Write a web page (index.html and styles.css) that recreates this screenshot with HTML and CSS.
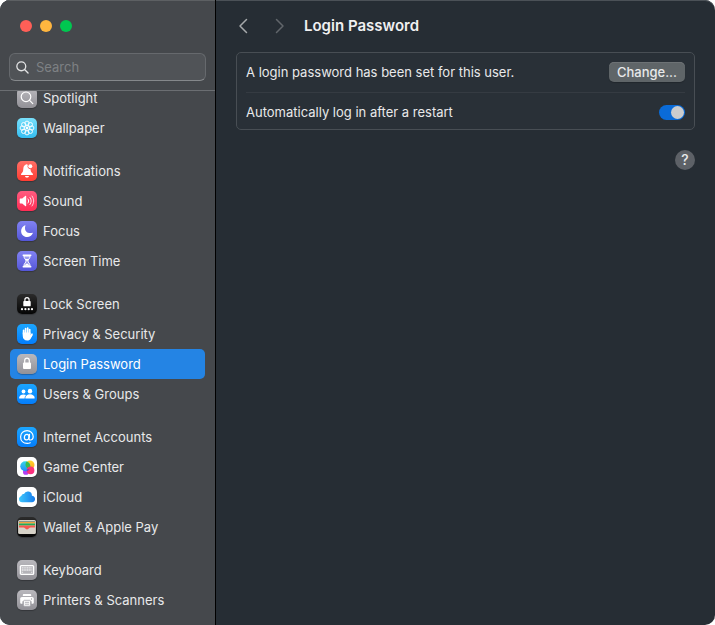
FILE: index.html
```html
<!DOCTYPE html>
<html lang="en">
<head>
<meta charset="utf-8">
<title>Login Password</title>
<link rel="stylesheet" href="styles.css">
</head>
<body>
<div class="window">
  <aside class="sidebar">
    <header class="sidebar-head">
      <div class="lights">
        <button class="light red" aria-label="Close"></button>
        <button class="light amber" aria-label="Minimize"></button>
        <button class="light green" aria-label="Zoom"></button>
      </div>
      <label class="search">
        <svg width="13" height="13" viewBox="0 0 14 14" fill="none" stroke="#e2e3e4" stroke-width="1.4" stroke-linecap="round" aria-hidden="true"><circle cx="5.7" cy="5.7" r="4.8"/><path d="M9.2 9.2L13 13"/></svg>
        <input type="search" placeholder="Search" aria-label="Search">
      </label>
    </header>
    <nav class="list">
      <div class="group">
        <a class="item" href="#spotlight"><svg class="tile gray" viewBox="0 0 20 20" aria-hidden="true"><g fill="none" stroke="#fff" stroke-width="1.2" stroke-linecap="round"><circle cx="9" cy="8.800" r="4.800"/><path d="M12.600 12.400l3.200 3.200"/></g></svg>Spotlight</a>
        <a class="item" href="#wallpaper"><svg class="tile cyan" viewBox="0 0 20 20" aria-hidden="true"><g fill="none" stroke="#fff" stroke-width=".9"><circle cx="10" cy="5.200" r="2.100"/><circle cx="13.400" cy="6.600" r="2.100"/><circle cx="14.800" cy="10" r="2.100"/><circle cx="13.400" cy="13.400" r="2.100"/><circle cx="10" cy="14.800" r="2.100"/><circle cx="6.600" cy="13.400" r="2.100"/><circle cx="5.200" cy="10" r="2.100"/><circle cx="6.600" cy="6.600" r="2.100"/><circle cx="10" cy="10" r="2.400"/></g><circle cx="10" cy="10" r="1.200" fill="#fff"/></svg>Wallpaper</a>
      </div>
      <div class="group">
        <a class="item" href="#notifications"><svg class="tile red-tile" viewBox="0 0 20 20" aria-hidden="true"><path fill="#fff" d="M9.600 3.300c.6 0 1 .3 1.200.7a2.900 2.900 0 0 0 2.700 4.200c.2 2.400.8 3.100 1.700 3.900.5.500.8.900.8 1.300 0 .4-.3.700-.8.700H4.800c-.5 0-.8-.3-.8-.7 0-.4.300-.8.800-1.300 1-.9 1.400-1.800 1.500-4.300.1-2 .8-3.300 2-3.800.1-.4.600-.7 1.300-.7zM8 14.900h4c-.2 1-1 1.700-2 1.700s-1.800-.7-2-1.700z"/><circle cx="13.300" cy="5.300" r="2" fill="#fff"/></svg>Notifications</a>
        <a class="item" href="#sound"><svg class="tile pink" viewBox="0 0 20 20" aria-hidden="true"><path fill="#fff" d="M2.700 8.300c0-.4.300-.7.700-.7h1.800l3-2.700c.5-.4 1-.2 1 .4v9.400c0 .6-.5.800-1 .4l-3-2.700H3.400c-.4 0-.7-.3-.7-.7z"/><g fill="none" stroke="#fff" stroke-linecap="round"><path d="M11 8c.9 1.300.9 2.700 0 4"/><path d="M13 6.500c1.600 2.300 1.600 4.700 0 7" opacity=".85"/><path d="M15 5c2.300 3.300 2.300 6.700 0 10" opacity=".75"/></g></svg>Sound</a>
        <a class="item" href="#focus"><svg class="tile indigo" viewBox="0 0 20 20" aria-hidden="true"><path fill="#fff" d="M8 4.200c.3-.1.600.1.400.5-.3.700-.4 1.400-.4 2.200 0 3.200 2.100 5.200 5.300 5.200.8 0 1.400-.1 2-.3.400-.2.700.1.500.5-.9 2.300-3.100 3.800-5.700 3.800-3.500 0-6-2.500-6-6 0-2.700 1.600-5.100 3.900-5.900z"/></svg>Focus</a>
        <a class="item" href="#screen-time"><svg class="tile indigo" viewBox="0 0 20 20" aria-hidden="true"><g fill="#fff"><rect x="5.500" y="3.500" width="9" height="1.500" rx=".7"/><rect x="5.500" y="15" width="9" height="1.500" rx=".7"/></g><path d="M6.900 5c0 2.600 2.200 3.500 2.200 5s-2.200 2.400-2.200 5h6.200c0-2.600-2.200-3.500-2.200-5s2.200-2.400 2.200-5z" fill="#fff" fill-opacity=".3" stroke="#fff" stroke-width="1"/><path fill="#fff" d="M8 8h4l-2 2.200zM7.500 14.700c.2-1.100 1.500-1.500 2.500-2.500 1 1 2.300 1.400 2.500 2.500z"/></svg>Screen Time</a>
      </div>
      <div class="group">
        <a class="item" href="#lock-screen"><svg class="tile black" viewBox="0 0 20 20" aria-hidden="true"><path d="M7.900 7.500V5.700a2.100 2.100 0 0 1 4.200 0v1.800" fill="none" stroke="#fff" stroke-width="1.200"/><rect x="6.300" y="6.900" width="7.400" height="5.400" rx=".9" fill="#fff"/><g fill="#fff"><circle cx="5" cy="15.200" r="1.100"/><circle cx="8.400" cy="15.200" r="1.100"/><circle cx="11.700" cy="15.200" r="1.100"/><circle cx="15" cy="15.200" r="1.100"/></g></svg>Lock Screen</a>
        <a class="item" href="#privacy"><svg class="tile blue" viewBox="0 0 20 20" aria-hidden="true"><g stroke="#fff" stroke-linecap="round" fill="none"><path d="M6.600 10V6.300M8.600 9V4.500M10.700 9V4.200M12.700 10V5.500" stroke-width="1.700"/><path d="M13.400 12.500l1.600-2.400" stroke-width="1.700"/></g><path fill="#fff" d="M5.750 8.500h7.800v3.300l1.200-1.500 1 .6-2 3.500c-.7 1.400-1.900 2.200-3.500 2.200-2.700 0-4.500-1.800-4.500-4.600z"/></svg>Privacy &amp; Security</a>
        <a class="item selected" href="#login-password" aria-current="page"><svg class="tile gray" viewBox="0 0 20 20" aria-hidden="true"><path d="M7.700 9V6.500a2.300 2.300 0 0 1 4.600 0V9" fill="none" stroke="#fff" stroke-width="1.200"/><rect x="6" y="8.600" width="8" height="6.400" rx="1" fill="#fff"/></svg>Login Password</a>
        <a class="item" href="#users"><svg class="tile blue" viewBox="0 0 20 20" aria-hidden="true"><g fill="#fff"><ellipse cx="6.500" cy="7.500" rx="1.900" ry="2.100"/><path d="M2.600 14.500c-.3 0-.5-.2-.5-.6 0-1.700 1.700-3.500 4.400-3.500 1 0 1.900.3 2.600.7-1 .9-1.500 2-1.500 3.400z"/><ellipse cx="13" cy="7.200" rx="2.200" ry="2.400"/><path d="M9 14.500c-.5 0-.7-.2-.7-.6 0-1.800 1.900-3.700 4.700-3.700s4.700 1.900 4.700 3.700c0 .4-.2.600-.7.600z"/></g></svg>Users &amp; Groups</a>
      </div>
      <div class="group">
        <a class="item" href="#internet"><svg class="tile blue" viewBox="0 0 20 20" aria-hidden="true"><g fill="none" stroke="#fff" stroke-width="1.200" stroke-linecap="round"><ellipse cx="9.700" cy="10.100" rx="2.300" ry="2.800" transform="rotate(12 9.700 10.100)"/><path d="M12.500 7.400l-.5 4c-.1 1 .4 1.600 1.300 1.600 1.500 0 2.900-1.400 2.900-3.400 0-3.400-2.700-6-6.100-6C6.300 3.600 3.600 6.300 3.600 10c0 3.900 2.700 6.400 6.600 6.400 1.200 0 2.200-.2 3.100-.6"/></g></svg>Internet Accounts</a>
        <a class="item" href="#game-center"><svg class="tile white" viewBox="0 0 20 20" aria-hidden="true"><defs><linearGradient id="gb" x1="0" y1="0" x2="0" y2="1"><stop offset="0" stop-color="#35d6e6"/><stop offset="1" stop-color="#218cfb"/></linearGradient><linearGradient id="gy" x1="0" y1="0" x2="0" y2="1"><stop offset="0" stop-color="#ffd829"/><stop offset="1" stop-color="#ff9d22"/></linearGradient><linearGradient id="gp" x1="0" y1="0" x2="1" y2="1"><stop offset="0" stop-color="#fa3b65"/><stop offset="1" stop-color="#fa2c88"/></linearGradient></defs><circle cx="8.900" cy="14.900" r="2.900" fill="#b33ff1"/><circle cx="13" cy="8" r="4.500" fill="url(#gy)"/><circle cx="8.300" cy="9.300" r="5" fill="url(#gb)"/><path d="M9.500 4.500c2.300.6 3.800 2.500 3.800 4.800 0 1-.3 2-.8 2.800-2.300-.3-4-2.100-4-4.300 0-1.200.4-2.400 1-3.300z" fill="#37bd4e"/><circle cx="13.600" cy="13.400" r="3.800" fill="url(#gp)"/><path d="M9.900 12.500c.8-.3 1.700-.6 2.500-.4-.6 1.200-1.400 2-2.500 2.300z" fill="#713cc5"/></svg>Game Center</a>
        <a class="item" href="#icloud"><svg class="tile white" viewBox="0 0 20 20" aria-hidden="true"><defs><linearGradient id="cl" x1="0" y1="0" x2="1" y2="0"><stop offset="0" stop-color="#3fc7fb"/><stop offset="1" stop-color="#157bec"/></linearGradient></defs><path fill="url(#cl)" d="M5.300 15.200A3.300 3.300 0 0 1 2 12c0-1.500 1-2.700 2.300-3.100A2.400 2.400 0 0 1 7 7.100a4.100 4.100 0 0 1 7.900 1.600c1.800.2 3.200 1.500 3.200 3.200s-1.300 3.300-3.100 3.300z"/></svg>iCloud</a>
        <a class="item" href="#wallet"><svg class="tile black" viewBox="0 0 20 20" aria-hidden="true"><rect x="1.100" y="3" width="17.800" height="13.900" rx="1.500" fill="#d6d2c8"/><rect x="2" y="4" width="16" height="1.500" fill="#8d9387"/><rect x="2" y="5" width="16" height="1.500" fill="#f5a23d"/><rect x="2" y="6.500" width="16" height="2" fill="#1fae57"/><path d="M2 8.500h16v2h-4.500c-.7 0-1.100.3-1.500.8-.5.700-1.200 1.100-2 1.100s-1.500-.4-2-1.100c-.4-.5-.8-.8-1.500-.8H2z" fill="#f7584f"/></svg>Wallet &amp; Apple Pay</a>
      </div>
      <div class="group">
        <a class="item" href="#keyboard"><svg class="tile gray" viewBox="0 0 20 20" aria-hidden="true"><rect x="3.400" y="5.600" width="13.200" height="8.800" rx="1" fill="#b4b3b8" stroke="#fff" stroke-width="1.400"/><path d="M4.800 7.900h10.400M4.800 10h10.400" stroke="#fff" stroke-width="1.400" stroke-dasharray="1.300 .4" opacity=".75"/><path d="M4.800 12.200h1.300M13.900 12.200h1.300" stroke="#fff" stroke-width="1.100" opacity=".75"/></svg>Keyboard</a>
        <a class="item" href="#printers"><svg class="tile gray" viewBox="0 0 20 20" aria-hidden="true"><g fill="#fff"><path d="M5.800 6V5.200c0-.8.500-1.300 1.300-1.300h5.800c.8 0 1.300.5 1.300 1.300V6z"/><path d="M5 6.900h10c1.100 0 1.800.7 1.800 1.800v3.700c0 .9-.5 1.400-1.400 1.400h-.8v-2.500H5.400v2.500h-.8c-.9 0-1.400-.5-1.400-1.400V8.700c0-1.100.7-1.800 1.800-1.800z"/></g><rect x="6.600" y="10.300" width="6.800" height="5.900" rx=".8" fill="#fff" stroke="#a5a4aa" stroke-width=".8"/><path d="M8 12.300h4M8 14.200h4" stroke="#9e9da3" stroke-width=".8"/><circle cx="14.500" cy="9" r=".7" fill="#a5a4aa"/></svg>Printers &amp; Scanners</a>
      </div>
    </nav>
  </aside>
  <main class="pane">
    <header class="toolbar">
      <button class="nav-button" aria-label="Back"><svg width="10" height="16" viewBox="0 0 10 16" aria-hidden="true"><path d="M8.500 1.500L2 8l6.500 6.500"/></svg></button>
      <button class="nav-button forward" aria-label="Forward"><svg width="10" height="16" viewBox="0 0 10 16" aria-hidden="true"><path d="M1.500 1.500L8 8l-6.500 6.500"/></svg></button>
      <h1>Login Password</h1>
    </header>
    <section class="card">
      <div class="row">
        <span>A login password has been set for this user.</span>
        <button class="change">Change...</button>
      </div>
      <div class="row">
        <label for="auto-login">Automatically log in after a restart</label>
        <input class="switch" type="checkbox" role="switch" id="auto-login" checked>
      </div>
    </section>
    <button class="help" aria-label="Help">?</button>
  </main>
</div>
</body>
</html>
```
FILE: styles.css
```css
* {
  box-sizing: border-box;
}

body {
  margin: 0;
  background: #fff;
  color: #e8e9ea;
  font: 400 13px/16px Inter, "Liberation Sans", sans-serif;
}

button,
input {
  margin: 0;
  padding: 0;
  border: 0;
  font: inherit;
  color: inherit;
}

.window {
  display: flex;
  height: 100vh;
  border-radius: 10px;
  overflow: hidden;
  background: #262d34;
  box-shadow: inset 0 1px #4b5157;
}

.sidebar {
  display: flex;
  flex: none;
  flex-direction: column;
  width: 216px;
  border-right: 1px solid #000;
  background: #45484c;
  box-shadow: inset 0 1px #5d6063;
}

.sidebar-head {
  padding: 20px 9px 9px;
  border-bottom: 1px solid #6b6e72;
}

.lights {
  display: flex;
  gap: 8px;
  padding-left: 11px;
}

.light {
  width: 12px;
  height: 12px;
  border-radius: 50%;
}

.red { background: #ff5f57; }
.amber { background: #ffb63f; }
.green { background: #00c750; }

.search {
  display: flex;
  align-items: center;
  gap: 7px;
  height: 28px;
  margin-top: 21px;
  padding: 0 6px;
  border: 1px solid #66696d;
  border-bottom-color: #85888b;
  border-radius: 6px;
  background: #505357;
}

.search svg {
  flex: none;
}

.search input {
  flex: 1;
  min-width: 0;
  background: none;
  outline: none;
  appearance: none;
}

.search input::placeholder {
  color: #7e8184;
  opacity: 1;
}

.list {
  display: flex;
  flex: 1;
  flex-direction: column;
  gap: 13px;
  min-height: 0;
  padding: 0 10px;
  overflow: hidden;
}

/* The list rests slightly scrolled under the header. */
.group:first-child {
  margin-top: -8px;
}

.item {
  display: flex;
  align-items: center;
  gap: 6px;
  height: 30px;
  padding: 0 7px;
  border-radius: 5px;
  color: inherit;
  text-decoration: none;
  white-space: nowrap;
}

.selected {
  background: #2484e4;
  color: #fff;
}

.tile {
  flex: none;
  width: 20px;
  height: 20px;
  border-radius: 5px;
  box-shadow: 0 1px 1px rgba(0, 0, 0, 0.25);
}

.gray { background: linear-gradient(#b9b8bd, #929197); }
.cyan { background: linear-gradient(#79e0fb, #34bdf0); }
.red-tile { background: linear-gradient(#ff6f66, #ff3c32); }
.pink { background: linear-gradient(#ff5c80, #ff2c54); }
.indigo { background: linear-gradient(#8182f1, #5456d8); }
.blue { background: linear-gradient(#1ba6ff, #047dfb); }
.black { background: linear-gradient(#2b2b2b, #050505); }
.white { background: #fff; }

.pane {
  display: flex;
  flex: 1;
  flex-direction: column;
  min-width: 0;
  padding: 0 20px;
}

.toolbar {
  display: flex;
  align-items: center;
  height: 52px;
}

.nav-button {
  display: flex;
  width: 14px;
  margin-right: 23px;
  justify-content: center;
  background: none;
}

.nav-button path {
  fill: none;
  stroke: #a6a9ab;
  stroke-width: 1.5;
  stroke-linecap: round;
  stroke-linejoin: round;
}

.forward {
  margin-right: 17px;
}

.forward path {
  stroke: #61666b;
}

h1 {
  margin: 0;
  color: #f0f0f1;
  font-size: 15px;
  font-weight: 600;
  line-height: 20px;
}

.card {
  padding: 0 9px;
  border: 1px solid #484e54;
  border-radius: 5px;
  background: #293037;
}

.row {
  display: flex;
  align-items: center;
  justify-content: space-between;
  padding: 9px 0 10px;
}

.row + .row {
  padding: 11px 0 9px;
  border-top: 1px solid #353b42;
}

.change {
  height: 20px;
  padding: 0 8px;
  border-radius: 5px;
  background: #5f6568;
  box-shadow: inset 0 1px #6d7275, 0 1px 1px rgba(0, 0, 0, 0.2);
  font-weight: 500;
  line-height: 20px;
}

.switch {
  display: flex;
  justify-content: flex-end;
  width: 26px;
  height: 15px;
  padding: 1px;
  border-radius: 8px;
  background: #0a6bd8;
  appearance: none;
}

.switch::before {
  content: "";
  width: 13px;
  height: 13px;
  border-radius: 50%;
  background: #cbccce;
}

.switch:not(:checked) {
  justify-content: flex-start;
  background: #4a5056;
}

.help {
  align-self: flex-end;
  width: 20px;
  height: 20px;
  margin-top: 20px;
  border-radius: 50%;
  background: #5d6167;
  font-size: 14px;
  font-weight: 500;
  line-height: 20px;
}
```
